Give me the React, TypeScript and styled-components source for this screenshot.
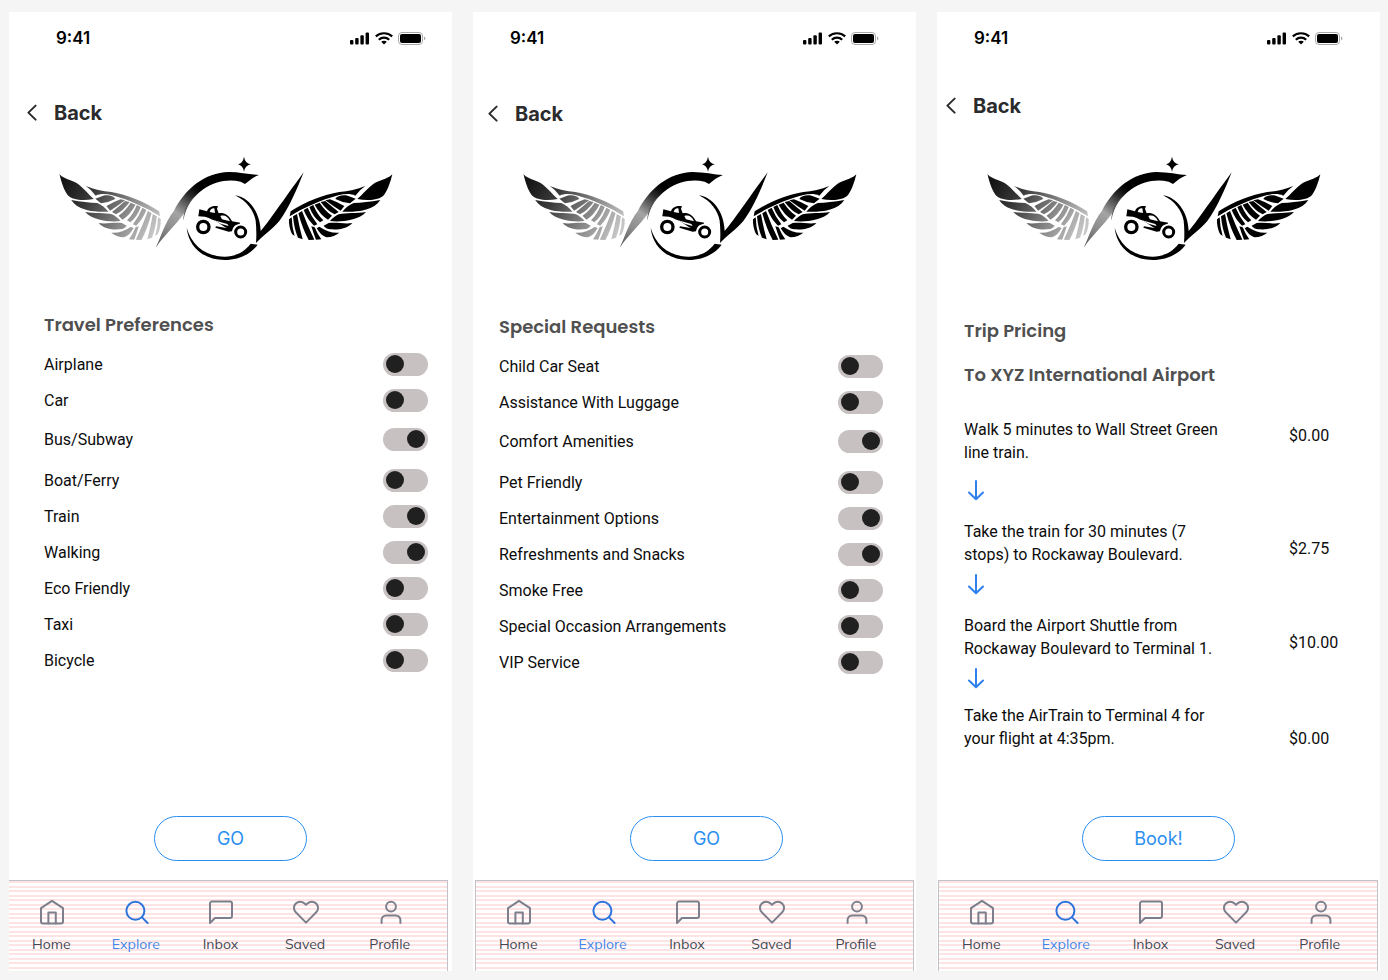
import React from "react";
import styled, { createGlobalStyle } from "styled-components";

const GlobalStyle = createGlobalStyle`
  *, *::before, *::after { box-sizing: border-box; }
  body { margin: 0; background: #f5f5f5; }
  h1, h2, p, ol, ul { margin: 0; padding: 0; font-weight: inherit; list-style: none; }
  svg { display: block; flex: none; }
`;

const Board = styled.main`
  display: grid;
  grid-template-columns: repeat(3, minmax(0, 1fr));
  gap: 21px;
  min-height: 100vh;
  padding: 12px 8px 9px 9px;
  font-family: Roboto, "Liberation Sans", sans-serif;
`;

const Phone = styled.section`
  display: flex;
  flex-direction: column;
  background: #fff;
`;

const StatusBar = styled.div<{ $left: number; $right: number }>`
  display: flex;
  align-items: center;
  justify-content: space-between;
  height: 52px;
  padding: 0 ${(p) => p.$right}px 0 ${(p) => p.$left}px;
  font: 600 17px/20px Inter, "Liberation Sans", sans-serif;
  color: #000;
`;

const StatusIcons = styled.div`
  display: flex;
  align-items: center;
  gap: 5px;
`;

const TopBar = styled.header<{ $drop: number; $inset: number }>`
  min-height: 86px;
  padding: ${(p) => p.$drop}px 0 0 ${(p) => p.$inset}px;
`;

const BackLink = styled.a`
  display: inline-flex;
  align-items: center;
  gap: 17px;
  color: #2b2b2d;
  font: 700 20px/28px Inter, Roboto, sans-serif;
  text-decoration: none;
`;

const LogoBox = styled.div`
  padding-left: 41px;
`;

const Heading = styled.h1<{ $gap: number }>`
  margin-top: ${(p) => p.$gap}px;
  color: #505050;
  font: 600 18px/28px Poppins, Inter, "Open Sans", sans-serif;
`;

const Content = styled.div<{ $left: number; $right: number }>`
  padding: 0 ${(p) => p.$right}px 0 ${(p) => p.$left}px;
`;

const ToggleList = styled.ul`
  margin-top: 7px;
`;

const ToggleRow = styled.li<{ $roomy?: boolean }>`
  height: ${(p) => (p.$roomy ? 42 : 36)}px;
  margin-bottom: ${(p) => (p.$roomy ? 2 : 0)}px;
`;

const ToggleLabel = styled.label`
  display: flex;
  align-items: center;
  justify-content: space-between;
  height: 100%;
  color: #0c0c0c;
  font-size: 16px;
  line-height: 23px;
`;

const Switch = styled.input`
  appearance: none;
  display: flex;
  align-items: center;
  width: 45px;
  height: 23px;
  margin: 0;
  padding: 0 3px;
  border-radius: 12px;
  background: #c8c1c1;
  cursor: pointer;

  &::before {
    content: "";
    width: 18px;
    height: 18px;
    border-radius: 50%;
    background: #202020;
  }
  &:checked {
    justify-content: flex-end;
  }
`;

const Steps = styled.ol`
  margin-top: 29px;
`;

const Step = styled.li`
  display: grid;
  grid-template-columns: minmax(0, 1fr) 91px;
  align-items: start;
  color: #0c0c0c;
  font-size: 16px;
  line-height: 23px;
`;

const StepText = styled.p`
  max-width: 270px;
`;

const Price = styled.p<{ $drop: number }>`
  padding-top: ${(p) => p.$drop}px;
`;

const ArrowBox = styled.div<{ $above: number; $below: number }>`
  padding: ${(p) => p.$above}px 0 ${(p) => p.$below}px;
`;

const Action = styled.div<{ $inset: number }>`
  display: flex;
  justify-content: center;
  margin-top: auto;
  padding: 24px 0 19px ${(p) => p.$inset}px;
`;

const PillButton = styled.button`
  width: 153px;
  height: 45px;
  border: 1px solid #2b8ff0;
  border-radius: 23px;
  background: #fff;
  color: #2b8ff0;
  font: 400 18px/24px Inter, Roboto, sans-serif;
  cursor: pointer;
`;

const TabBar = styled.nav<{ $left: number; $right: number; $open?: boolean }>`
  display: flex;
  height: 91px;
  margin: 0 ${(p) => p.$right}px 0 ${(p) => p.$left}px;
  padding: 18px 15px 0 0;
  border: solid #bfc3c9;
  border-width: 1px 1px 0 ${(p) => (p.$open ? 0 : 1)}px;
  background: repeating-linear-gradient(
    #fde3e3 0 2px,
    #fff 2px 5px,
    #fde3e3 5px 7px,
    #fff 7px 9px
  );
`;

const Tab = styled.a<{ $active?: boolean }>`
  display: flex;
  flex: 1;
  flex-direction: column;
  align-items: center;
  gap: 9px;
  color: ${(p) => (p.$active ? "#4385e8" : "#454854")};
  font: 400 14px/20px Mulish, Nunito, Lato, sans-serif;
  text-decoration: none;

  svg {
    margin-left: 2px;
    color: ${(p) => (p.$active ? "#2f74dc" : "#7d808c")};
  }
`;

const line = {
  fill: "none",
  stroke: "currentColor",
  strokeWidth: 2,
  strokeLinecap: "round",
  strokeLinejoin: "round",
} as const;

const Wing = () => (
  <>
    <path d="M367 73C350 90 326 90 307 104C290 118 278 132 262 147C290 152 328 152 342 135C356 115 361 95 367 73Z" />
    <path d="M286 108C262 118 235 124 208 126C160 134 108 154 62 184L59 199C100 174 152 150 205 136C225 131 243 131 256 137Q268 120 286 108Z" />
    <path d="M331 150C300 156 275 158 251 159C237 164 225 176 217 185C252 187 310 184 331 150Z" />
    <path d="M288 186C260 190 228 188 206 193C197 197 186 206 180 213C210 217 265 212 288 186Z" />
    <path d="M247 219C225 223 200 216 176 219L161 227C164 233 172 237 182 238C205 240 232 236 247 219Z" />
    <path d="M208 248C187 250 167 242 148 230L140 235C149 249 158 259 169 262C186 262 198 256 208 248Z" />
    <path d="M196 147C201 138 216 134 233 137L257 146L240 160Q218 158 196 147Z" />
    <path d="M166 151L180 148Q204 157 223 168L212 182Q190 169 166 151Z" />
    <path d="M152 156L166 153Q186 170 206 186L194 193Q172 183 152 156Z" />
    <path d="M134 164L149 158Q166 184 186 197L174 209Q150 194 134 164Z" />
    <path d="M118 171L130 165Q142 194 160 211L150 217Q130 202 118 171Z" />
    <path d="M101 180L113 173Q124 200 142 223L132 227Q112 208 101 180Z" />
    <path d="M85 190L96 183Q112 226 133 269L116 270Q98 238 85 190Z" />
    <path d="M124 229L134 232Q142 252 154 268L138 269Q131 252 124 229Z" />
    <path d="M69 199L81 192Q88 232 98 268L84 263Q72 236 69 199Z" />
    <path d="M57 208L65 202Q66 232 74 258L66 252Q56 232 57 208Z" />
  </>
);

const Logo = ({ id }: { id: string }) => (
  <svg width="350" height="120" viewBox="0 0 1050 360" role="img" aria-label="Winged rally car logo">
    <defs>
      <linearGradient id={id + "-wing"} gradientUnits="userSpaceOnUse" x1="350" y1="90" x2="80" y2="250">
        <stop offset="0" stopColor="#141414" />
        <stop offset="0.3" stopColor="#3a3a3a" />
        <stop offset="0.7" stopColor="#8e8e8e" />
        <stop offset="1" stopColor="#c6c6c6" />
      </linearGradient>
      <linearGradient id={id + "-sweep"} gradientUnits="userSpaceOnUse" x1="18" y1="290" x2="145" y2="115">
        <stop offset="0" stopColor="#555" />
        <stop offset="0.3" stopColor="#8c8c8c" />
        <stop offset="0.55" stopColor="#a4a4a4" />
        <stop offset="0.85" stopColor="#2a2a2a" />
        <stop offset="1" stopColor="#000" />
      </linearGradient>
    </defs>
    <g transform="translate(388 0) scale(-0.98 1)" fill={`url(#${id}-wing)`}>
      <Wing />
    </g>
    <g transform="translate(660 0)">
      <Wing />
    </g>
    <g transform="translate(300 0)">
      <path
        fill={`url(#${id}-sweep)`}
        d="M17 293C34 258 44 218 72 182C106 116 164 68 236 66C270 66 300 74 327 75C308 82 298 92 285 102L272 95C232 86 192 96 160 118C132 138 116 160 102 190C84 218 48 250 17 293Z"
      />
      <path d="M282 20Q285 39 302 43Q285 47 282 65Q279 47 264 43Q279 39 282 20Z" />
      <path d="M135 138C112 158 99 184 100 212C105 184 117 158 135 138Z" fill="#555" />
      <path d="M110 233C116 292 162 330 224 330C268 330 302 312 323 284L302 281C284 305 256 320 224 320C168 319 126 288 110 233Z" />
      <path d="M255 136C296 142 330 184 332 243C352 222 400 150 461 67C440 120 418 172 388 213C364 240 340 256 318 279C320 254 319 232 317 212C311 182 292 154 255 136Z" />
      <circle cx="160" cy="231" r="17" fill="none" stroke="#000" strokeWidth="10" />
      <circle cx="272" cy="246" r="15" fill="none" stroke="#000" strokeWidth="9" />
      <path
        fillRule="evenodd"
        d="M148 178L171 184C174 173 184 167 204 168L201 176L206 190C220 187 236 194 246 214L271 218L268 222C256 223 249 230 246 244L236 245L196 233L198 229L230 234C214 226 202 214 184 208C172 200 158 200 145 199ZM179 186L195 189L193 175C185 174 181 178 179 186ZM211 198L216 208L240 214C234 200 224 194 211 198Z"
      />
      <path d="M190 210L232 222L236 228Q212 224 190 210Z" fill="#fff" />
    </g>
  </svg>
);

const StatusGlyphs = () => (
  <StatusIcons>
    <svg width="20" height="13" viewBox="0 0 20 13" aria-label="Signal">
      <rect x="0" y="8" width="3.4" height="4.5" rx="1" />
      <rect x="5.2" y="6" width="3.4" height="6.5" rx="1" />
      <rect x="10.4" y="3.2" width="3.4" height="9.3" rx="1" />
      <rect x="15.6" y="0.4" width="3.4" height="12.1" rx="1" />
    </svg>
    <svg width="18" height="13" viewBox="0 0 18 13" aria-label="Wi-Fi">
      <g fill="none" stroke="#000" strokeWidth="2.2">
        <path d="M0.8 4.4C5.3 0.2 12.7 0.2 17.2 4.4" />
        <path d="M3.8 7.7C6.7 5 11.3 5 14.2 7.7" />
      </g>
      <path d="M6.2 9.8C7.8 8.5 10.2 8.5 11.8 9.8L9 12.6Z" />
    </svg>
    <svg width="28" height="13" viewBox="0 0 28 13" aria-label="Battery">
      <rect x="0.5" y="0.5" width="24" height="12" rx="3.4" fill="none" stroke="#a8a8a8" />
      <rect x="2" y="2" width="21" height="9" rx="2" />
      <path d="M26 4.6Q27.4 5.2 27.4 6.5Q27.4 7.8 26 8.4Z" fill="#a8a8a8" />
    </svg>
  </StatusIcons>
);

const tabs = [
  {
    name: "Home",
    icon: (
      <>
        <path d="M2 9.2L13 1.8L24 9.2V22.6A2 2 0 0 1 22 24.6H4A2 2 0 0 1 2 22.6Z" />
        <path d="M9.4 24.4V13.4H16.8V24.4" />
      </>
    ),
  },
  {
    name: "Explore",
    icon: (
      <>
        <circle cx="11.4" cy="11.8" r="9" />
        <path d="M18 18.4L23.6 24" />
      </>
    ),
  },
  {
    name: "Inbox",
    icon: <path d="M2 24V4.6A2 2 0 0 1 4 2.6H22A2 2 0 0 1 24 4.6V17A2 2 0 0 1 22 19H7Z" />,
  },
  {
    name: "Saved",
    icon: (
      <path d="M23.2 4.5a6.2 6.2 0 0 0-8.8 0L13 5.9l-1.4-1.4a6.2 6.2 0 0 0-8.8 8.8L13 23.6l10.2-10.3a6.2 6.2 0 0 0 0-8.8z" />
    ),
  },
  {
    name: "Profile",
    icon: (
      <>
        <circle cx="13" cy="7.6" r="4.9" />
        <path d="M3.6 24V21A4.6 4.6 0 0 1 8.2 16.4H17.8A4.6 4.6 0 0 1 22.4 21V24" />
      </>
    ),
  },
];

type ScreenProps = {
  id: string;
  statusLeft: number;
  statusRight: number;
  backDrop: number;
  backInset: number;
  action: string;
  actionInset?: number;
  navLeft: number;
  navRight: number;
  navOpen?: boolean;
  children: React.ReactNode;
};

const Screen = (p: ScreenProps) => (
  <Phone>
    <StatusBar $left={p.statusLeft} $right={p.statusRight}>
      <span>9:41</span>
      <StatusGlyphs />
    </StatusBar>
    <TopBar $drop={p.backDrop} $inset={p.backInset}>
      <BackLink href="#back">
        <svg width="10" height="18" viewBox="0 0 10 18" {...line}>
          <path d="M8.6 1.6L1.4 8.6L8.6 15.6" />
        </svg>
        Back
      </BackLink>
    </TopBar>
    <LogoBox>
      <Logo id={p.id} />
    </LogoBox>
    {p.children}
    <Action $inset={p.actionInset ?? 0}>
      <PillButton type="button">{p.action}</PillButton>
    </Action>
    <TabBar $left={p.navLeft} $right={p.navRight} $open={p.navOpen}>
      {tabs.map((t) => (
        <Tab key={t.name} href={"#" + t.name.toLowerCase()} $active={t.name === "Explore"}>
          <svg width="26" height="26" viewBox="0 0 26 26" {...line}>
            {t.icon}
          </svg>
          {t.name}
        </Tab>
      ))}
    </TabBar>
  </Phone>
);

type Option = { label: string; on?: boolean; roomy?: boolean };

const Toggles = ({ options }: { options: Option[] }) => (
  <ToggleList>
    {options.map((o) => (
      <ToggleRow key={o.label} $roomy={o.roomy}>
        <ToggleLabel>
          {o.label}
          <Switch type="checkbox" defaultChecked={o.on} />
        </ToggleLabel>
      </ToggleRow>
    ))}
  </ToggleList>
);

const travel: Option[] = [
  { label: "Airplane" },
  { label: "Car" },
  { label: "Bus/Subway", on: true, roomy: true },
  { label: "Boat/Ferry" },
  { label: "Train", on: true },
  { label: "Walking", on: true },
  { label: "Eco Friendly" },
  { label: "Taxi" },
  { label: "Bicycle" },
];

const requests: Option[] = [
  { label: "Child Car Seat" },
  { label: "Assistance With Luggage" },
  { label: "Comfort Amenities", on: true, roomy: true },
  { label: "Pet Friendly" },
  { label: "Entertainment Options", on: true },
  { label: "Refreshments and Snacks", on: true },
  { label: "Smoke Free" },
  { label: "Special Occasion Arrangements" },
  { label: "VIP Service" },
];

const steps = [
  { text: "Walk 5 minutes to Wall Street Green line train.", price: "$0.00", drop: 6, above: 14, below: 18 },
  { text: "Take the train for 30 minutes (7 stops) to Rockaway Boulevard.", price: "$2.75", drop: 17, above: 6, below: 18 },
  { text: "Board the Airport Shuttle from Rockaway Boulevard to Terminal 1.", price: "$10.00", drop: 17, above: 6, below: 14 },
  { text: "Take the AirTrain to Terminal 4 for your flight at 4:35pm.", price: "$0.00", drop: 23 },
];

export default function App() {
  return (
    <>
      <GlobalStyle />
      <Board>
        <Screen
          id="travel"
          statusLeft={47}
          statusRight={26}
          backDrop={35}
          backInset={18}
          action="GO"
          navLeft={0}
          navRight={4}
          navOpen
        >
          <Content $left={35} $right={24}>
            <Heading $gap={41}>Travel Preferences</Heading>
            <Toggles options={travel} />
          </Content>
        </Screen>
        <Screen
          id="requests"
          statusLeft={37}
          statusRight={37}
          backDrop={36}
          backInset={15}
          action="GO"
          actionInset={24}
          navLeft={2}
          navRight={2}
        >
          <Content $left={26} $right={33}>
            <Heading $gap={43}>Special Requests</Heading>
            <Toggles options={requests} />
          </Content>
        </Screen>
        <Screen
          id="pricing"
          statusLeft={37}
          statusRight={37}
          backDrop={28}
          backInset={9}
          action="Book!"
          navLeft={1}
          navRight={2}
        >
          <Content $left={27} $right={0}>
            <Heading $gap={47}>Trip Pricing</Heading>
            <Heading as="h2" $gap={16}>To XYZ International Airport</Heading>
            <Steps>
              {steps.map((s) => (
                <Step key={s.text}>
                  <div>
                    <StepText>{s.text}</StepText>
                    {s.above !== undefined && (
                      <ArrowBox $above={s.above} $below={s.below ?? 0}>
                        <svg width="24" height="24" viewBox="0 0 24 24" color="#2f80ed" {...line}>
                          <path d="M12 3V21M5 14.5L12 21.2L19 14.5" />
                        </svg>
                      </ArrowBox>
                    )}
                  </div>
                  <Price $drop={s.drop}>{s.price}</Price>
                </Step>
              ))}
            </Steps>
          </Content>
        </Screen>
      </Board>
    </>
  );
}
